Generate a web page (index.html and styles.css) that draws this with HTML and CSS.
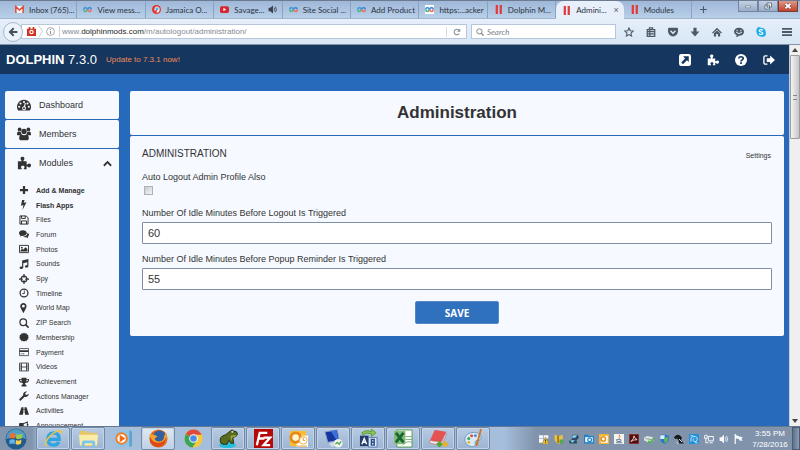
FILE: index.html
```html
<!DOCTYPE html>
<html lang="en">
<head>
    <meta charset="UTF-8">
    <meta name="viewport" content="width=device-width, initial-scale=1.0">
    <title>Administration</title>
    <link rel="stylesheet" href="styles.css">
</head>
<body>
    <!-- shared icons -->
    <svg class="sprite" aria-hidden="true">
        <symbol id="i-chain" viewBox="0 0 16 16"><g fill="none" stroke-width="3"><path stroke="#3f9fe0" d="M8 8C6.500 5.500 5.500 4.500 4.500 4.500a3.200 3.200 0 0 0-3 3.500"/><path stroke="#4cb98c" d="M1.500 8a3.200 3.200 0 0 0 3 3.500C6 11.500 7 10 8 8"/><path stroke="#4a90d9" d="M8 8c1-2 2-3.500 3.500-3.500a3.200 3.200 0 0 1 3 3.500"/><path stroke="#ec7467" d="M14.500 8a3.200 3.200 0 0 1-3 3.500C10 11.500 9 10 8 8"/></g></symbol>
        <symbol id="i-bars" viewBox="0 0 16 16"><path fill="#e23b3b" d="M3 0h4v16H3zM10 0h4v16h-4z"/></symbol>
        <symbol id="i-puzzle" viewBox="0 0 16 16"><path d="M1 6h4.200C5.800 5.200 4 4.500 4 2.800 4 1.500 5 .8 6.200.8s2.300.7 2.300 2C8.500 4.500 6.800 5.200 7.300 6H11v3.800c.9.500 1.400-1.100 3-1.100 1.200 0 2 .9 2 2.100s-.8 2.200-2 2.200c-1.600 0-2.100-1.600-3-1.200V15H7.800c-.6-1 .8-1.300.8-2.500 0-1-.9-1.500-2-1.500s-2 .5-2 1.500c0 1.200 1.300 1.500.8 2.500H1z"/></symbol>
        <symbol id="i-gauge" viewBox="0 0 16 16"><path d="M8 2a8 8 0 0 0-6.700 12.300h13.400A8 8 0 0 0 8 2z"/><g fill="#f6f9ff"><circle cx="8" cy="4.500" r="1.200"/><circle cx="4" cy="6.200" r="1.200"/><circle cx="12" cy="6.200" r="1.200"/><circle cx="2.500" cy="10" r="1.200"/><circle cx="13.500" cy="10" r="1.200"/><path d="M9 5.500l1.200.3-1 4a2.200 2.200 0 1 1-1.200-.3z"/></g><circle cx="8" cy="11.700" r="1.100"/></symbol>
        <symbol id="i-users" viewBox="0 0 16 16"><circle cx="3" cy="2.800" r="2.200"/><circle cx="13" cy="2.800" r="2.200"/><circle cx="8" cy="5" r="3"/><path d="M0 8.500C0 6 1 5 2 5.300c1 .7 1.800.4 2.500.2C4.300 7 5 8 5.300 8.500c-1 0-1.800.3-2.300 1H1.500C.6 9.500 0 9.200 0 8.500zM16 8.500c0-2.500-1-3.500-2-3.200-1 .7-1.800.4-2.500.2.200 1.500-.5 2.500-.8 3 1 0 1.800.3 2.300 1h1.500c.9 0 1.500-.3 1.500-1zM5 8.300c2 1.400 4 1.400 6 0 1.600.2 2.500 2 2.500 4.700 0 1.300-.9 2-2 2h-7c-1.100 0-2-.7-2-2 0-2.700.9-4.500 2.500-4.700z"/></symbol>
        <symbol id="i-plus" viewBox="0 0 16 16"><path d="M6.200 1.500h3.600v4.700h4.700v3.600H9.800v4.700H6.200V9.800H1.500V6.200h4.700z"/></symbol>
        <symbol id="i-bolt" viewBox="0 0 16 16"><path d="M5 0h4L7.500 4.500 12 3.500 5.500 16 7 8 3 9z"/></symbol>
        <symbol id="i-floppy" viewBox="0 0 16 16"><path fill="none" stroke="currentColor" stroke-width="1.600" d="M1.500 1.500h10l3 3v10h-13zM4 1.500v4h6v-4M4 14.500V9.500h8v5"/></symbol>
        <symbol id="i-chat" viewBox="0 0 16 16"><path d="M6.300 2C9.700 2 12.500 4 12.500 6.500S9.700 11 6.300 11c-.6 0-1.200-.1-1.700-.2-1 .8-2.200 1.200-3.600 1.200.6-.6 1-1.300 1.100-2C.800 9.200 0 7.900 0 6.500 0 4 2.800 2 6.300 2z"/><path d="M13.700 6c1.500.8 2.300 1.900 2.300 3.200s-.8 2.400-2 3.200c.1.700.5 1.200 1 1.800-1.300-.1-2.500-.5-3.400-1.200-2 .4-4 0-5.400-1 4 .2 7.500-2.300 7.500-6z"/></symbol>
        <symbol id="i-photo" viewBox="0 0 16 16"><path fill="none" stroke="currentColor" stroke-width="1.500" d="M.8 2.200h14.400v11.600H.8z"/><circle cx="4.500" cy="5.800" r="1.500"/><path d="M2.500 12v-2l2.500-2.500 1.500 1.500L10.500 5l3 3v4z"/></symbol>
        <symbol id="i-music" viewBox="0 0 16 16"><path d="M5 2.500L15 0v11.500c0 1.400-1.300 2.200-2.800 2.200S9.500 13 9.500 11.800s1.200-2 2.700-2c.4 0 .7 0 1 .1V5L6.800 6.700v7c0 1.500-1.300 2.300-2.900 2.300S1 15.200 1 14s1.200-2 2.900-2c.4 0 .8 0 1.100.2z"/></symbol>
        <symbol id="i-target" viewBox="0 0 16 16"><circle cx="8" cy="8" r="4.600" fill="none" stroke="currentColor" stroke-width="2"/><path d="M7 0h2v6H7zM7 10h2v6H7zM0 7h6v2H0zM10 7h6v2h-6z"/></symbol>
        <symbol id="i-clock" viewBox="0 0 16 16"><circle cx="8" cy="8" r="6.300" fill="none" stroke="currentColor" stroke-width="2"/><path fill="none" stroke="currentColor" stroke-width="1.400" d="M8.500 4v5H5"/></symbol>
        <symbol id="i-pin" viewBox="0 0 16 16"><path fill-rule="evenodd" d="M7 0c3 0 5 2.100 5 5 0 1.500-.4 2.300-.9 3.300L7.700 15.300c-.3.700-1.100.7-1.400 0L2.900 8.300C2.400 7.300 2 6.500 2 5c0-2.900 2-5 5-5zm0 2.700a2.300 2.300 0 1 0 0 4.600 2.300 2.300 0 0 0 0-4.600z"/></symbol>
        <symbol id="i-search" viewBox="0 0 16 16"><circle cx="6.800" cy="6.800" r="5.300" fill="none" stroke="currentColor" stroke-width="2"/><path stroke="currentColor" stroke-width="2.600" stroke-linecap="round" d="M11 11l3.500 3.500"/></symbol>
        <symbol id="i-badge" viewBox="0 0 16 16"><path d="M8 1l1.700 1.500L12 1.900l.7 2.200 2.300.7-.6 2.200L16 8l-1.600 1.500.6 2.200-2.300.7-.7 2.200-2.300-.6L8 15.500 6.300 14l-2.300.6-.7-2.200-2.300-.7.6-2.200L0 8l1.600-1L1 4.800l2.300-.7L4 1.900l2.300.6z"/></symbol>
        <symbol id="i-card" viewBox="0 0 16 16"><path fill="none" stroke="currentColor" stroke-width="1.200" d="M.7 2.500h14.600v11.300H.7z"/><path d="M.7 5h14.600v3H.7zM2.500 10.500h2v1.200h-2zM5.500 10.500h3v1.200h-3z"/></symbol>
        <symbol id="i-film" viewBox="0 0 16 16"><path fill="none" stroke="currentColor" stroke-width="1.300" d="M.7 1.700h14.600v12.600H.7zM4 1.700v12.600M12 1.700v12.600M4 8h8M.7 5H4M.7 8H4M.7 11H4M12 5h3.300M12 8h3.300M12 11h3.300"/></symbol>
        <symbol id="i-trophy" viewBox="0 0 16 16"><path d="M4 1h8v2h4v2c0 2.200-2 4-4.800 4.300-.7.700-1.700 1-1.700 2 0 .9 2.500.8 2.500 2.700v1H4v-1c0-1.900 2.500-1.800 2.500-2.700 0-1-1-1.300-1.700-2C2 9 0 7.200 0 5V3h4zM1.500 4.500c0 1.500 1.200 2.600 2.800 3C4 6.600 4 5.500 4 4.500zM14.500 4.500H12c0 1 0 2.100-.3 3 1.600-.4 2.800-1.500 2.800-3z"/></symbol>
        <symbol id="i-wrench" viewBox="0 0 16 16"><path d="M15.700 4.500A5 5 0 0 1 9 9.200l-6 6a1.700 1.700 0 0 1-2.300-2.400l6-6A5 5 0 0 1 13 1l-3 2v2.300l2 1.200z"/></symbol>
        <symbol id="i-road" viewBox="0 0 16 16"><path d="M4 2h3.200L7 5h2l-.2-3H12l4 12H9.700L9.300 10H6.700l-.4 4H0zM7 6.300L6.800 9h2.400L9 6.300z"/></symbol>
        <symbol id="i-horn" viewBox="0 0 16 16"><path fill-rule="evenodd" d="M14 0v4.500c1.500 0 1.500 3 0 3V12c-2-1.700-4.500-3-7-3.200-.8 1.200.6 2 1 3.200 0 1.500.5 2 1 2.500-1.500 1.200-4 1-4.500 0C4 12.500 3.500 11 4 9H2C.5 9 0 8 0 7V5c0-1 .5-2 2-2h4.500C9 3 12 1.700 14 0zm-1.500 2.800C10.500 4 9 4.500 7.500 4.500v3c1.500.2 3 .7 5 1.900z"/></symbol>
        <symbol id="i-up" viewBox="0 0 16 16"><path fill="none" stroke="currentColor" stroke-width="3.200" d="M1.500 12L8 5.500 14.500 12"/></symbol>
        <symbol id="i-ext" viewBox="0 0 16 16"><rect width="16" height="16" rx="3"/><path fill="#14365f" d="M5.500 3H13v7.500l-2.400-2.300L5.300 13.500 3 11.200l5-5.200z"/></symbol>
        <symbol id="i-help" viewBox="0 0 16 16"><circle cx="8" cy="8" r="8"/><path fill="none" stroke="#14365f" stroke-width="2.200" d="M5 6c.2-1.700 1.500-2.300 3-2.300 1.700 0 3 .9 3 2.300 0 2-3 1.800-3 4"/><path fill="#14365f" d="M6.800 11h2.400v2.200H6.800z"/></symbol>
        <symbol id="i-exit" viewBox="0 0 16 16"><path fill="none" stroke="currentColor" stroke-width="1.800" d="M6 2.500H3A1.800 1.800 0 0 0 1.200 4.300v7.400A1.800 1.800 0 0 0 3 13.500h3"/><path d="M5 5.500h4.500V2l6.500 6-6.500 6v-3.500H5z"/></symbol>
    </svg>

    <div class="browser">
        <div class="tabs">
            <div class="tab-list">
                <div class="tab"><svg viewBox="0 0 16 16"><path fill="#f5f5f5" d="M1 2h14v12H1z"/><path fill="none" stroke="#dd4638" stroke-width="2.600" d="M1.500 14V3L8 9l6.500-6v11"/></svg><span>Inbox (765)...</span></div>
                <div class="tab"><svg><use href="#i-chain"/></svg><span>View mess...</span></div>
                <div class="tab"><svg viewBox="0 0 16 16"><circle cx="8" cy="8" r="8" fill="#e4322e"/><ellipse cx="9" cy="8" rx="4.500" ry="5.500" fill="#fff"/><path fill="#42b5e9" d="M6 5l6-1-1 5-4 2z"/><path fill="#e4322e" d="M4 10l5-1-1 5z"/></svg><span>Jamaica O...</span></div>
                <div class="tab"><svg viewBox="0 0 16 16"><rect y="2" width="16" height="12" rx="3" fill="#d7262d"/><path fill="#fff" d="M6 5l5 3-5 3z"/></svg><span>Savage...</span><svg class="sound" viewBox="0 0 16 16"><path fill="#3b424c" d="M1 5h3l5-4v14l-5-4H1z"/><path fill="none" stroke="#3b424c" stroke-width="1.500" d="M11 5q2 3 0 6M13 3q4 5 0 10"/></svg></div>
                <div class="tab"><svg><use href="#i-chain"/></svg><span>Site Social ...</span></div>
                <div class="tab"><svg><use href="#i-chain"/></svg><span>Add Product</span></div>
                <div class="tab"><svg class="boxed"><use href="#i-chain"/></svg><span>https:...acker</span></div>
                <div class="tab"><svg><use href="#i-bars"/></svg><span>Dolphin M...</span></div>
                <div class="tab active"><svg><use href="#i-bars"/></svg><span>Admini...</span><button class="close" aria-label="Close tab">×</button></div>
                <div class="tab"><svg><use href="#i-bars"/></svg><span>Modules</span></div>
            </div>
            <button class="new-tab" aria-label="New tab"><svg viewBox="0 0 16 16"><path d="M7 2h2v5h5v2H9v5H7V9H2V7h5z"/></svg></button>
            <div class="window-buttons">
                <button aria-label="Minimize"><svg viewBox="0 0 16 16"><path fill="#fff" stroke="#4b596b" d="M3 8h10v3.500H3z"/></svg></button>
                <button aria-label="Restore"><svg viewBox="0 0 16 16"><path fill="#fff" stroke="#4b596b" stroke-width="1.500" d="M6 2h9v8H6zM2 6h9v8H2z"/><path fill="#62758e" d="M5 9h3v2H5z"/></svg></button>
                <button class="quit" aria-label="Close"><svg viewBox="0 0 16 16"><path stroke="#5c2a26" stroke-width="5.500" d="M3 3.500l10 9M13 3.500l-10 9"/><path stroke="#fff" stroke-width="3.500" d="M3 3.500l10 9M13 3.500l-10 9"/></svg></button>
            </div>
        </div>
        <div class="toolbar">
            <button class="back" aria-label="Back"><svg viewBox="0 0 16 16"><path fill="none" stroke="currentColor" stroke-width="3" d="M9 2L3 8l6 6M3 8h12"/></svg></button>
            <div class="address">
                <svg class="blocker" viewBox="0 0 16 16"><path fill="#cf3423" d="M0 3h3V0h3v3h4V0h3v3h3v13H0z"/><circle cx="8" cy="9" r="4" fill="#fff"/><circle cx="8" cy="9" r="2" fill="#cf3423"/></svg>
                <svg class="chevron" viewBox="0 0 8 16"><path fill="none" stroke="#b9c0c8" d="M1 0l5 8-5 8"/></svg>
                <svg class="info" viewBox="0 0 16 16"><circle cx="8" cy="8" r="7" fill="none" stroke="#8c9299" stroke-width="1.400"/><path fill="#8c9299" d="M7 3.500h2v2H7zM7 7h2v5.500H7z"/></svg>
                <div class="url">www.<b>dolphinmods.com</b>/m/autologout/administration/</div>
                <button class="reload" aria-label="Reload"><svg viewBox="0 0 16 16"><path fill="none" stroke="#84909d" stroke-width="2.200" d="M12.500 11A5.500 5.500 0 1 1 12 4.500"/><path fill="#84909d" d="M14.500 1v6.500H8z"/></svg></button>
            </div>
            <label class="search"><svg><use href="#i-search"/></svg><input type="text" placeholder="Search" aria-label="Search"></label>
            <div class="tools">
                <svg viewBox="0 0 16 16"><path fill="none" stroke="currentColor" stroke-width="1.700" d="M8 1.500l2 4.500 4.800.5-3.600 3.200 1 4.800L8 12l-4.200 2.500 1-4.800L1.200 6.500 6 6z"/></svg>
                <svg viewBox="0 0 16 16"><path fill="none" stroke="currentColor" stroke-width="2" d="M5.500 3.500V1.500h5v2M2 4h12v11H2zM2 7.500h12M2 11h12M6 4v11"/></svg>
                <svg viewBox="0 0 16 16"><path d="M2 1h12q2 0 2 2v4q-1 7-8 8-7-1-8-8V3q0-2 2-2z"/><path fill="none" stroke="#e3edf9" stroke-width="2" d="M4 6l4 4 4-4"/></svg>
                <svg viewBox="0 0 16 16"><path d="M5.500 1h5v6H15l-7 8-7-8h4.500z"/></svg>
                <svg viewBox="0 0 16 16"><path d="M8 1l8 8-1.500 1.500L8 4.500l-6.500 6L0 9zM3 10l5-4.500L13 10v5H9.500v-4h-3v4H3z"/></svg>
                <svg viewBox="0 0 16 16"><path d="M8 1c5 0 8 2.800 8 6.500S13 14 8 14q-2 2-5 2 1.500-1.500 1.200-2.800Q0 11 0 7.500C0 3.800 3 1 8 1z"/><path fill="none" stroke="#e3edf9" stroke-width="1.600" d="M5 4.500V7M11 4.500V7M3.500 8.500q4.500 4 9 0"/></svg>
                <svg viewBox="0 0 16 16"><path fill="#16ade9" d="M4 0q2 0 3 1 8 0 8.500 7.500 1 2-.2 4.500-2 3.500-5.500 2.500Q1.500 16 1 8.500q-1-2 0-5Q2 .3 4 0z"/><path fill="none" stroke="#fff" stroke-width="2" d="M11 5.500C9.500 3.500 5 4 5.200 6.200 5.500 8.500 11 7.500 11 10c-.2 2.500-5 2.500-6.200.3"/></svg>
                <svg class="menu" viewBox="0 0 16 16"><path d="M0 1.500h16v3H0zM0 6.500h16v3H0zM0 11.500h16v3H0z"/></svg>
            </div>
        </div>
    </div>

    <div class="viewport">
        <div class="page">
            <header class="header">
                <h1><b>DOLPHIN</b> 7.3.0</h1>
                <a href="#" class="update">Update to 7.3.1 now!</a>
                <nav class="header-links">
                    <a href="#" aria-label="Site"><svg><use href="#i-ext"/></svg></a>
                    <a href="#" aria-label="Modules"><svg><use href="#i-puzzle"/></svg></a>
                    <a href="#" aria-label="Help"><svg><use href="#i-help"/></svg></a>
                    <a href="#" aria-label="Log out"><svg><use href="#i-exit"/></svg></a>
                </nav>
            </header>
            <div class="columns">
                <nav class="sidebar">
                    <a href="#" class="side-item"><svg><use href="#i-gauge"/></svg>Dashboard</a>
                    <a href="#" class="side-item"><svg><use href="#i-users"/></svg>Members</a>
                    <div class="side-group">
                        <a href="#" class="side-item"><svg><use href="#i-puzzle"/></svg>Modules<svg class="arrow"><use href="#i-up"/></svg></a>
                        <ul>
                            <li><a href="#" class="strong"><svg><use href="#i-plus"/></svg>Add &amp; Manage</a></li>
                            <li><a href="#" class="strong"><svg><use href="#i-bolt"/></svg>Flash Apps</a></li>
                            <li><a href="#"><svg><use href="#i-floppy"/></svg>Files</a></li>
                            <li><a href="#"><svg><use href="#i-chat"/></svg>Forum</a></li>
                            <li><a href="#"><svg><use href="#i-photo"/></svg>Photos</a></li>
                            <li><a href="#"><svg><use href="#i-music"/></svg>Sounds</a></li>
                            <li><a href="#"><svg><use href="#i-target"/></svg>Spy</a></li>
                            <li><a href="#"><svg><use href="#i-clock"/></svg>Timeline</a></li>
                            <li><a href="#"><svg><use href="#i-pin"/></svg>World Map</a></li>
                            <li><a href="#"><svg><use href="#i-search"/></svg>ZIP Search</a></li>
                            <li><a href="#"><svg><use href="#i-badge"/></svg>Membership</a></li>
                            <li><a href="#"><svg><use href="#i-card"/></svg>Payment</a></li>
                            <li><a href="#"><svg><use href="#i-film"/></svg>Videos</a></li>
                            <li><a href="#"><svg><use href="#i-trophy"/></svg>Achievement</a></li>
                            <li><a href="#"><svg><use href="#i-wrench"/></svg>Actions Manager</a></li>
                            <li><a href="#"><svg><use href="#i-road"/></svg>Activities</a></li>
                            <li><a href="#"><svg><use href="#i-horn"/></svg>Announcement</a></li>
                        </ul>
                    </div>
                </nav>
                <main>
                    <h2 class="title">Administration</h2>
                    <form class="panel">
                        <div class="panel-head">
                            <h3>ADMINISTRATION</h3>
                            <a href="#">Settings</a>
                        </div>
                        <div class="field check">
                            <label for="adminAlso">Auto Logout Admin Profile Also</label>
                            <input type="checkbox" id="adminAlso">
                        </div>
                        <div class="field">
                            <label for="logoutMinutes">Number Of Idle Minutes Before Logout Is Triggered</label>
                            <input type="text" id="logoutMinutes" value="60">
                        </div>
                        <div class="field">
                            <label for="popupMinutes">Number Of Idle Minutes Before Popup Reminder Is Triggered</label>
                            <input type="text" id="popupMinutes" value="55">
                        </div>
                        <button type="button" class="save">SAVE</button>
                    </form>
                </main>
            </div>
        </div>
        <div class="scrollbar">
            <svg viewBox="0 0 10 6"><path fill="#444" d="M5 1l3 4H2z"/></svg>
            <div class="thumb"><i></i></div>
            <svg class="down" viewBox="0 0 10 6"><path fill="#444" d="M5 5l3-4H2z"/></svg>
        </div>
    </div>

    <div class="taskbar">
        <button class="start" aria-label="Start"><svg viewBox="0 0 22 22"><circle cx="11" cy="11" r="10.500" fill="#245b8b"/><path fill="#4f9cc5" d="M1 11a10 10 0 0 1 20 0Q11 7 1 11z"/><path fill="#ee6f35" d="M5 6q3-2 5.500 0L10 10.500q-3-1-5.500 0z"/><path fill="#9bcb48" d="M11.500 6q3 1.500 6-.5L17 10q-3 2-6 .5z"/><path fill="#5fb8ec" d="M4.500 12q3-1.500 5.500 0l-.5 4q-2-1-5 0z"/><path fill="#fbcf4a" d="M11 12q3 1.500 5.500-.5L16 15.500q-2.500 2-5.500.5z"/></svg></button>
        <div class="apps">
            <button aria-label="Internet Explorer"><svg viewBox="0 0 20 20"><path fill="none" stroke="#2fa4e2" stroke-width="3.500" d="M4 11h12q0-7-6-7-6 .5-6 7 .5 6 6 6 4 0 5.500-3.500"/><path fill="none" stroke="#f1c33d" stroke-width="1.600" d="M3 18C-1 15 6 5 15 2q5-1 3 3"/></svg></button>
            <button aria-label="Explorer"><svg viewBox="0 0 20 20"><path fill="#e6c567" d="M1 2h7l1 2h10v14H1z"/><path fill="#faeba8" d="M0 6h20l-1 11H1z"/><path fill="#7cc5ea" d="M3 20v-6q0-2 2-2h10q2 0 2 2v6h-3v-5H6v5z"/></svg></button>
            <button class="plain" aria-label="Media Player"><svg viewBox="0 0 20 20"><path fill="#8bc4e5" d="M3 3l13-2v17l-13 1z"/><path fill="#5ea4d1" d="M16 1l3 2v15l-3 1z"/><circle cx="8" cy="10" r="6.500" fill="#f47b20"/><circle cx="8" cy="10" r="4.500" fill="#fff"/><path fill="#f06a12" d="M6 6l6 4-6 4z"/></svg></button>
            <button class="lit" aria-label="Firefox"><svg viewBox="0 0 20 20"><circle cx="10" cy="10" r="9.500" fill="#e5661b"/><circle cx="11" cy="8" r="6.500" fill="#315f9f"/><path fill="#f5a42a" d="M1 5l3 1q3 0 5 2l-3 2q1 4 6 3 4-1 4-6l2-3q2 6-1 10-4 5-10 4Q-1 16 1 5z"/><path fill="#dc4b16" d="M1 8q3 7 9 6.500 6 0 8-6 0 7-5 9.500-8 3-12-4z"/></svg></button>
            <button class="plain" aria-label="Chrome"><svg viewBox="0 0 20 20"><circle cx="10" cy="10" r="9.500" fill="#f7ca3e"/><path fill="#df4a3d" d="M10 10L1.800 5.200Q5 .5 10 .5q6 0 8.500 5.500H10z"/><path fill="#3aa757" d="M1.800 5.200Q-1 11 2.500 16q2.500 3 6.500 3.500L13.500 12z"/><circle cx="10" cy="10" r="4.500" fill="#fff"/><circle cx="10" cy="10" r="3.500" fill="#4a8ae8"/></svg></button>
            <button aria-label="Frog"><svg viewBox="0 0 20 20"><ellipse cx="9" cy="17" rx="9" ry="3" fill="#25bfdd"/><path fill="#566b20" stroke="#25310d" d="M2 15Q-1 8 7 6l5-4q2-2 3 0 4 0 4.500 3 0 3-5 4l1 6h-3l-2-3-2 4H4z"/><path fill="#a2a644" d="M12 7l7-1q-1 2-5 3l-1 4z"/><circle cx="14" cy="3" r="1" fill="#eee"/></svg></button>
            <button aria-label="FileZilla"><svg viewBox="0 0 20 20"><path fill="#b70808" d="M0 0h20v20H0z"/><path fill="none" stroke="#fff" stroke-width="2.400" d="M3 17L6 4h8M5 10h6M10 9h7l-7 8h7"/></svg></button>
            <button aria-label="Outlook"><svg viewBox="0 0 20 20"><path fill="#f7bd34" d="M1 2h17v16H1z"/><path fill="#fff" d="M8 7h12v12H8z"/><circle cx="7" cy="9" r="5" fill="#fff4d4" stroke="#e68a12" stroke-width="3"/><circle cx="15" cy="12" r="4" fill="#fff" stroke="#e6ae47"/><path fill="none" stroke="#e09720" d="M15 9v3h2M8 18h11"/></svg></button>
            <button aria-label="Remote Desktop"><svg viewBox="0 0 20 20"><path fill="#17369c" stroke="#8ba2c4" d="M1 3l13-2 2 11-12 2z"/><path fill="#3d70dc" d="M7 2l6-1 2 10-3-1z"/><path fill="#d2dae4" d="M5 15l10-2 2 3-9 3z"/><circle cx="15" cy="15" r="4.500" fill="#eef4ee"/><path stroke="#55a44e" stroke-width="1.300" fill="none" d="M12 16l2-2 2 2 2-3"/></svg></button>
            <button aria-label="Rename"><svg viewBox="0 0 20 20"><path fill="#243e6c" d="M1 7h9v11H1z"/><path fill="#dfebf8" stroke="#567ab0" d="M10 9h9v10h-9z"/><path fill="#8ac45b" stroke="#5d9a39" d="M3 4q5-4 10-1V0l5 4-5 4V5Q8 3 4 6z"/><path fill="none" stroke="#fff" stroke-width="1.500" d="M3 16l2.500-6L8 16M4 14h3"/><path fill="none" stroke="#2c4a87" stroke-width="1.500" d="M13 11v6h3v-6zM13 14h3"/></svg></button>
            <button aria-label="Excel"><svg viewBox="0 0 20 20"><path fill="#fff" stroke="#4d9c55" d="M3 1h16v18H3z"/><path fill="#87ba79" d="M0 2h12v14H0z"/><path stroke="#17682f" stroke-width="3" d="M2 4l8 10M10 4L2 14"/><path fill="none" stroke="#76ad75" d="M12 8h7M12 11h7M9 17q4-5 10-3"/></svg></button>
            <button aria-label="Snipping"><svg viewBox="0 0 20 20"><path fill="#e45252" d="M6 1l12 2-5 11-12-2z"/><path fill="#f3e7e7" stroke="#b66" stroke-width=".6" d="M1 12l12 2 5-10v3l-5 10-12-2z"/><path stroke="#50a432" stroke-width="2.500" d="M11 13v6M8 16h6"/><path stroke="#e3b324" stroke-width="2.500" d="M17 13v6M14 16h6"/></svg></button>
            <button aria-label="Paint"><svg viewBox="0 0 20 20"><path fill="#dceaf5" stroke="#6c9cc1" d="M1 13Q0 6 7 4q8-2 11 4 0 5-5 4-2 1-1 4-1 4-6 2-4-1-5-5z"/><circle cx="5" cy="10" r="1.600" fill="#3aa65a"/><circle cx="8" cy="7" r="1.600" fill="#e1503d"/><circle cx="12" cy="7" r="1.500" fill="#4285d4"/><circle cx="5" cy="14" r="1.500" fill="#e3b324"/><path stroke="#c87930" stroke-width="2" d="M18 0l-5 18"/></svg></button>
        </div>
        <div class="tray">
            <svg viewBox="0 0 16 16"><path fill="#f5f7fb" d="M0 2h7v5H0zM8 2h7v5H8zM0 8h7v6H0z"/><path fill="#f6c634" stroke="#81661b" stroke-width=".7" d="M10.500 5l5.500 11H5z"/><path stroke="#333" stroke-width="1.500" d="M10.500 9v3M10.500 13v1.500"/></svg>
            <svg viewBox="0 0 16 16"><path fill="#eac246" d="M1 1l7 2 6-2v9q-2 4-6 6-6-3-7-6z"/><path fill="#a57918" d="M5 2v11l3 2V3z"/><circle cx="12" cy="12" r="3.500" fill="#54a84e"/></svg>
            <svg viewBox="0 0 16 16"><path fill="#294d68" d="M5 1h9l2 5-4 4 1 5H1l-1-4 5-3z"/><path fill="#8bd6ec" d="M6 2h7l-3 4H5zM2 10h8l-5 4z"/></svg>
            <svg viewBox="0 0 16 16"><path fill="#1a83c9" d="M0 1h7l1 2h8v12H0z"/><path fill="#fff" d="M2 5h12v8H2z"/><circle cx="9" cy="9" r="3" fill="none" stroke="#1a83c9" stroke-width="2"/></svg>
            <svg viewBox="0 0 16 16"><path fill="#f2b632" d="M0 0h16v16H0z"/><path fill="#fff" d="M3 3h11v11H3z"/><circle cx="7" cy="8" r="3.500" fill="none" stroke="#e6921a" stroke-width="2.500"/></svg>
            <svg viewBox="0 0 16 16"><path fill="#f4f3ef" d="M0 0h16v16H0z"/><path fill="none" stroke="#d76a2c" stroke-width="1.500" d="M8 1q3 3 0 5 0 2 1 2"/><path fill="none" stroke="#5a7ea0" stroke-width="1.500" d="M4 9h7v3H5zM3 14h10"/></svg>
            <svg viewBox="0 0 16 16"><path fill="#520c0b" stroke="#b1261c" d="M.5.500h15v15H.5z"/><path fill="none" stroke="#fff" stroke-width="1.200" d="M8 3q0 5-5 9 4-3 10-3Q9 8 8 3z"/></svg>
            <svg viewBox="0 0 16 16"><path fill="#dde1df" d="M0 6l5-3 10 2v6l-9 2-6-3z"/><path fill="#717a7d" d="M2 7l10 1v1L2 8z"/><path fill="none" stroke="#52b94a" stroke-width="3" d="M7 11l3 3 6-8"/></svg>
            <svg viewBox="0 0 16 16"><path fill="#2377ce" d="M1 1h10l5 2-1 9-6 4-6-4z"/><path fill="#daeffd" d="M2 2h7v6H2z"/><path fill="#65b94f" d="M8 7l6-3v7l-5 4z"/></svg>
            <svg viewBox="0 0 16 16"><path fill="#17191b" d="M0 5q4-6 9-3l4 4-2 3 5 6H7l1-4-3-4-3 1z"/><path fill="none" stroke="#e3e7ea" stroke-width="1.500" d="M8 8l5 5M4 13l4 3"/></svg>
            <svg viewBox="0 0 16 16"><path fill="#2390d9" d="M0 0h16v16H0z"/><path fill="none" stroke="#c5edff" stroke-width="1.500" d="M3 12Q2 4 8 4t5 5-5 3 0-5M2 3h5M10 14h4"/></svg>
            <svg viewBox="0 0 16 16"><path fill="none" stroke="#f6f8fb" stroke-width="1.600" d="M2 2h3v5H1V2M3 7v7h4M7 4h8v7H7zM9 14h5"/></svg>
            <svg viewBox="0 0 16 16"><path fill="#f6f8fb" d="M1 5h3l4-4v14l-4-4H1z"/><path fill="none" stroke="#f6f8fb" stroke-width="1.300" d="M10 5q2 3 0 6M12 3q4 5 0 10"/></svg>
            <svg viewBox="0 0 16 16"><path fill="#f6f8fb" d="M1 0h2v16H1zM3 2l5 1v1l6 1-2 3 2 3-6-1V8L3 7z"/></svg>
        </div>
        <div class="clock"><span>3:55 PM</span><span>7/28/2016</span></div>
        <button class="show-desktop" aria-label="Show desktop"></button>
    </div>
</body>
</html>
```

FILE: styles.css
```css
* {
    box-sizing: border-box;
}
body {
    margin: 0;
    height: 100vh;
    display: flex;
    flex-direction: column;
    overflow: hidden;
    font-family: "Liberation Sans", Arial, sans-serif;
    font-size: 9px;
    color: #333;
}
svg {
    display: block;
    flex: none;
    fill: currentColor;
}
button {
    border: none;
    padding: 0;
    margin: 0;
    background: none;
    cursor: pointer;
}
a {
    color: inherit;
    text-decoration: none;
}
h1, h2, h3, ul {
    margin: 0;
    padding: 0;
    font-weight: normal;
}
.sprite {
    display: none;
}

/* browser */
.browser {
    flex: none;
    color: #2a3440;
}
.tabs {
    display: flex;
    height: 19px;
    border-top: 1px solid #6d7b90;
    border-bottom: 1px solid #a3b5cb;
    background: linear-gradient(#9fb8d8, #b9cfe9);
}
.tab-list {
    display: flex;
    flex: 1;
    min-width: 0;
    padding-left: 9px;
}
.tab {
    flex: 1 1 0;
    min-width: 0;
    display: flex;
    align-items: center;
    padding: 0 5px 0 6px;
    border-right: 1px solid #8ba3c2;
    font-family: Lato, "Open Sans", sans-serif;
    font-size: 8px;
    white-space: nowrap;
}
.tab svg {
    width: 9px;
    height: 9px;
    margin-right: 5px;
}
.tab .boxed {
    background: #fff;
}
.tab .sound {
    margin: 0 0 0 auto;
}
.tab.active {
    margin-bottom: -1px;
    border: none;
    border-radius: 8px 8px 0 0;
    background: #e6effa;
}
.close {
    margin-left: auto;
    font-size: 9px;
    line-height: 9px;
    color: #5a6470;
}
.new-tab {
    width: 23px;
    display: flex;
    align-items: center;
    justify-content: center;
    color: #49586a;
}
.new-tab svg {
    width: 9px;
    height: 9px;
}
.window-buttons {
    display: flex;
    align-self: flex-start;
    width: 85px;
    padding: 0 2px 0 23px;
}
.window-buttons button {
    flex: 1;
    height: 11px;
    display: flex;
    align-items: center;
    justify-content: center;
    border: 1px solid #74869f;
    border-top: none;
    background: linear-gradient(#c3d1e4, #9aaec9);
}
.window-buttons svg {
    width: 8px;
    height: 8px;
}
.window-buttons .quit {
    border-color: #7b3a33;
    background: linear-gradient(#dc9a8c, #c2412c);
}
.toolbar {
    display: flex;
    align-items: center;
    height: 26px;
    padding: 0 8px 0 3px;
    border-bottom: 1px solid #8494a8;
    background: linear-gradient(#e6effa, #d8e6f5);
}
.back {
    width: 20px;
    height: 20px;
    display: flex;
    align-items: center;
    justify-content: center;
    border: 1px solid #a8b8ca;
    border-radius: 50%;
    background: #edf3fa;
    color: #46515e;
    z-index: 1;
}
.back svg {
    width: 10px;
    height: 10px;
}
.address {
    flex: 1;
    display: flex;
    align-items: center;
    height: 15px;
    margin-left: -2px;
    padding-left: 5px;
    border: 1px solid #b7c7da;
    background: #fff;
}
.blocker {
    width: 9px;
    height: 9px;
}
.chevron {
    width: 6px;
    height: 13px;
    margin: 0 2px;
}
.info {
    width: 9px;
    height: 9px;
    margin-right: 4px;
}
.url {
    flex: 1;
    padding-left: 2px;
    border-left: 1px solid #ccd2d8;
    font-size: 8px;
    line-height: 11px;
    white-space: nowrap;
    color: #858a90;
}
.url b {
    font-weight: normal;
    color: #1b1f24;
}
.reload {
    width: 20px;
    display: flex;
    justify-content: center;
    padding: 1px 0;
    border-left: 1px solid #d5dce4;
}
.reload svg {
    width: 8px;
    height: 8px;
}
.search {
    width: 145px;
    height: 15px;
    display: flex;
    align-items: center;
    gap: 3px;
    margin-left: 4px;
    padding-left: 4px;
    border: 1px solid #b7c7da;
    background: #fff;
    color: #858a90;
}
.search svg {
    width: 8px;
    height: 8px;
}
.search input {
    min-width: 0;
    flex: 1;
    height: 11px;
    padding: 0;
    border: none;
    outline: none;
    font: italic 8px Lato, sans-serif;
}
.search input::placeholder {
    color: #7c8288;
}
.tools {
    width: 176px;
    display: flex;
    align-items: center;
    justify-content: space-between;
    padding-left: 8px;
    color: #4e5967;
}
.tools svg {
    width: 10px;
    height: 10px;
}
.tools .menu {
    margin-left: 4px;
}

/* page */
.viewport {
    flex: 1;
    min-height: 0;
    display: flex;
}
.page {
    flex: 1;
    min-width: 0;
    overflow: hidden;
    background: #276abb;
}
.header {
    display: flex;
    align-items: center;
    height: 29px;
    padding: 0 14px 0 6px;
    background: #14365f;
    color: #fff;
}
.header h1 {
    font-size: 13px;
}
.update {
    margin-left: 9px;
    font-size: 8px;
    color: #f08a55;
}
.header-links {
    display: flex;
    gap: 16px;
    margin-left: auto;
}
.header-links svg {
    width: 12px;
    height: 12px;
}
.columns {
    display: grid;
    grid-template-columns: 114px 1fr;
    gap: 11px;
    align-items: start;
    padding: 17px 5px;
}
.sidebar {
    display: grid;
    gap: 1px;
}
.side-item, .side-group {
    border-radius: 2px;
    background: #f6f9ff;
}
.side-item {
    display: flex;
    align-items: center;
    height: 28px;
    padding: 0 7px 0 12px;
    font-size: 9px;
}
.side-item svg {
    width: 14px;
    height: 14px;
    margin-right: 8px;
}
.side-item .arrow {
    width: 9px;
    height: 9px;
    margin: 0 0 0 auto;
}
.side-group ul {
    display: grid;
    grid-template-rows: repeat(17, 1fr);
    height: 250px;
    margin-top: 6px;
    list-style: none;
    font-size: 7px;
}
.side-group li a {
    display: flex;
    align-items: center;
    height: 100%;
    padding-left: 14px;
}
.side-group li svg {
    width: 10px;
    height: 10px;
    margin-right: 7px;
}
.strong {
    font-weight: bold;
}
.title, .panel {
    border-radius: 2px;
    background: #f6f9ff;
}
.title {
    height: 44px;
    margin-bottom: 1px;
    font-size: 17px;
    line-height: 44px;
    font-weight: bold;
    text-align: center;
}
.panel {
    padding: 12px;
}
.panel-head {
    display: flex;
    justify-content: space-between;
    align-items: center;
    margin-bottom: 11px;
}
.panel-head h3 {
    font-size: 10px;
    line-height: 12px;
}
.panel-head a {
    padding: 4px 1px 0 0;
    font-size: 7px;
    line-height: 8px;
}
.field {
    margin-bottom: 9px;
}
.field label {
    display: block;
    margin-bottom: 2px;
    font-size: 9px;
    line-height: 13px;
}
.field input[type="text"] {
    display: block;
    width: 100%;
    height: 22px;
    padding: 0 5px;
    border: 1px solid #7f8fa5;
    border-radius: 1px;
    background: #fff;
    font: 11px "Liberation Sans", Arial, sans-serif;
    color: #333;
}
.check {
    margin-bottom: 12px;
}
.check input {
    display: block;
    appearance: none;
    width: 9px;
    height: 9px;
    margin: 0 2px;
    border: 1px solid #aeb1b5;
    background: linear-gradient(135deg, #c7cacd, #f4f5f6);
}
.save {
    display: block;
    width: 84px;
    height: 23px;
    margin: 11px auto 0;
    border: 1px solid #5389c9;
    border-radius: 2px;
    background: #2f71bc;
    font: bold 10px "Open Sans", sans-serif;
    color: #fff;
}
.scrollbar {
    width: 11px;
    display: flex;
    flex-direction: column;
    border-left: 1px solid #c9cdd2;
    background: #efefef;
}
.scrollbar svg {
    width: 10px;
    height: 6px;
    margin: 2px 0;
}
.scrollbar .down {
    margin-top: auto;
}
.thumb {
    height: 84px;
    display: flex;
    align-items: center;
    justify-content: center;
    border: 1px solid #9b9da0;
    border-radius: 1px;
    background: linear-gradient(90deg, #f4f4f4, #c4c5c7);
}
.thumb i {
    width: 4px;
    height: 5px;
    border-top: 1px solid #83868a;
    border-bottom: 1px solid #83868a;
}

/* taskbar */
.taskbar {
    flex: none;
    display: flex;
    align-items: center;
    height: 24px;
    border-top: 1px solid #66788f;
    background: linear-gradient(90deg, #8195ae 0, #8195ae 4%, #a5bedc 5%, #a5bedc 63%, #8093ab 67%);
}
.start {
    width: 36px;
    display: flex;
    justify-content: center;
    padding-right: 4px;
}
.start svg {
    width: 22px;
    height: 22px;
}
.apps {
    display: flex;
    gap: 1px;
}
.apps button {
    width: 34px;
    height: 23px;
    display: flex;
    align-items: center;
    justify-content: center;
    border: 1px solid #7389a5;
    border-radius: 2px;
    background: linear-gradient(#b7cbe3, #9cb4d2);
    box-shadow: inset 0 0 0 1px #c2d4e9;
}
.apps .plain {
    border-color: transparent;
    background: none;
    box-shadow: none;
}
.apps .lit {
    background: linear-gradient(#dfe9f4, #bed0e5);
}
.apps svg {
    width: 19px;
    height: 19px;
}
.tray {
    display: flex;
    gap: 5px;
    margin-left: auto;
}
.tray svg {
    width: 10px;
    height: 10px;
}
.clock {
    width: 44px;
    display: flex;
    flex-direction: column;
    align-items: center;
    margin-left: 4px;
    font-size: 8px;
    line-height: 11px;
    color: #fff;
}
.show-desktop {
    width: 8px;
    height: 23px;
    border: 1px solid #4c5d73;
    background: linear-gradient(90deg, #5e7189, #8a9db5);
}
```
